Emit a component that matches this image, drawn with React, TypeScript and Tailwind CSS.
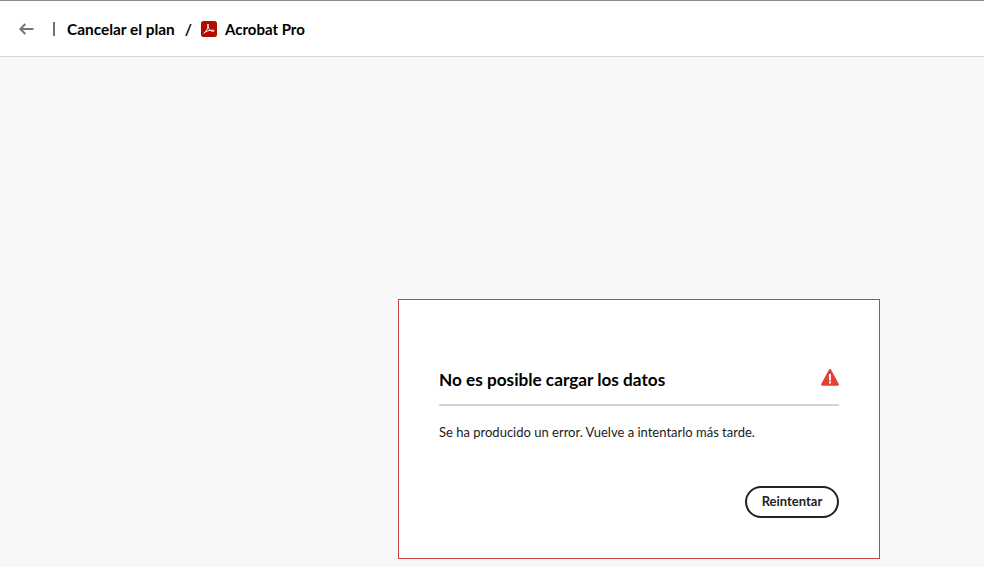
export default function App() {
  return (
    <div className="h-[567px] w-[984px] overflow-hidden bg-[#f8f8f8] font-['Lato','Noto_Sans',sans-serif] text-black">
      <header className="flex h-[57px] items-center border-t border-b border-t-[#8e8e8e] border-b-[#d5d5d5] bg-white pl-[19px]">
        <svg width="15" height="12" viewBox="0 0 15 12" className="mr-[19px]" fill="none" stroke="#757575" strokeWidth="2">
          <path d="M14.500 6H1.500M6.300 1L1.300 6l5 5" />
        </svg>
        <div className="mr-[12px] h-[14px] w-[2px] bg-[#6d7378]" />
        <span className="mt-[2px] text-[15.4px] font-bold">Cancelar el plan</span>
        <span className="mx-[10px] mt-[2px] text-[15.4px] font-bold">/</span>
        <svg width="16" height="16" viewBox="0 0 16 16" className="mr-[8px] -ml-[1px] mt-[1px]">
          <rect width="16" height="16" rx="2.500" fill="#b30b00" />
          <path d="M2.800 12.200c1.700-.9 3.400-3.600 4.400-6.500.3-1.100.3-2.700-.2-2.700s-.5 1.700 0 3c.8 2.100 2.500 3.800 3.600 4.200 1 .3 2.700.3 2.700-.4 0-.8-2.500-.9-5.100-.3-2.300.5-4.400 1.500-5.400 2.700z" fill="none" stroke="#fff" strokeWidth="1" />
        </svg>
        <span className="mt-[1px] text-[15px] font-bold">Acrobat Pro</span>
      </header>
      <main className="pl-[398px] pt-[242px]">
        <section className="h-[260px] w-[482px] border border-[#c9423f] bg-white px-[40px] pt-[66px]">
          <div className="flex h-[40px] items-start justify-between border-b-2 border-[#d5d5d5]">
            <h1 className="text-[17.2px] leading-[28px] font-bold">No es posible cargar los datos</h1>
            <svg width="18" height="17" viewBox="0 0 18 17" className="mt-[3px]">
              <path d="M9 0c.5 0 .9.300 1.100.700l7.700 14.300c.4.800-.1 1.700-1 1.700H1.200c-.9 0-1.400-.9-1-1.700L7.900.7C8.100.3 8.500 0 9 0z" fill="#e34234" />
              <rect x="8" y="5" width="2" height="6.500" fill="#fff" />
              <rect x="8" y="12.500" width="2" height="2" fill="#fff" />
            </svg>
          </div>
          <p className="mt-[16px] text-[13px] leading-[20px] text-[#1a1a1a]">Se ha producido un error. Vuelve a intentarlo más tarde.</p>
          <div className="mt-[44px] flex justify-end">
            <button className="h-[32px] w-[94px] rounded-full border-2 border-[#222] text-[13px] font-bold text-[#222]">Reintentar</button>
          </div>
        </section>
      </main>
    </div>
  );
}
